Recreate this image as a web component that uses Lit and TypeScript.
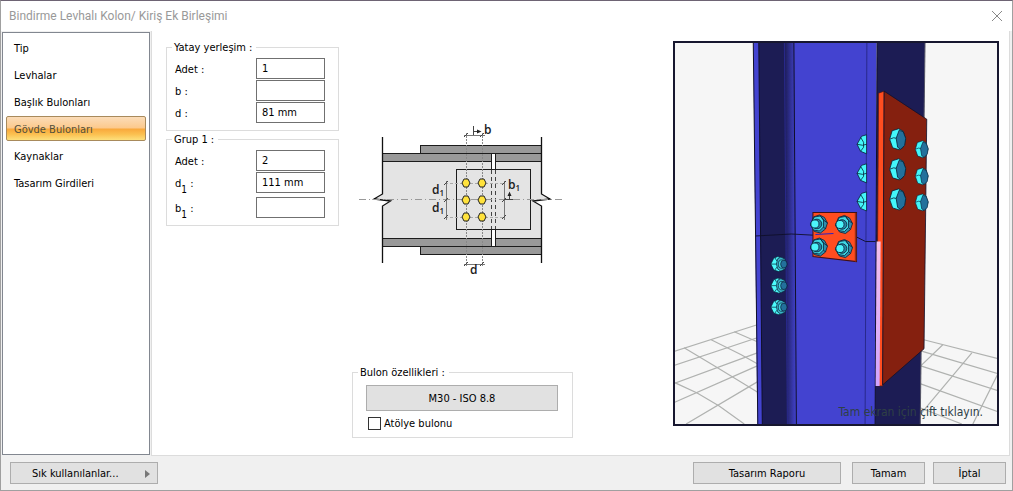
import { LitElement, html, svg, css } from "lit";
import { customElement, property, state } from "lit/decorators.js";

const INK = "#10102a";

@customElement("joint-diagram")
class JointDiagram extends LitElement {
  static styles = css`
    :host { display: block; }
    svg { display: block; width: 100%; height: auto; }
    text { font-family: "Open Sans", sans-serif; font-weight: 600; font-size: 12px; fill: #1a1a1a; }
    .sub { font-size: 8px; }
  `;

  bolt(x: number, y: number) {
    return svg`<polygon points="${x - 4},${y} ${x - 2},${y - 4} ${x + 2},${y - 4} ${x + 4},${y} ${x + 2},${y + 4} ${x - 2},${y + 4}"
      fill="#ffe23c" stroke="#222" stroke-width="1"/>`;
  }

  tick(x: number, y: number) {
    return svg`<path d="M${x - 2} ${y + 2}L${x + 2} ${y - 2}" stroke="#444" stroke-width="1"/>`;
  }

  render() {
    const cols = [466, 482];
    const rows = [183, 200, 217];
    return html`<svg viewBox="352 120 221 160" role="img" aria-label="Bulon yerleşimi">
      <path d="M382.5 153.5H541.5V194L550 199L533 201L541.5 206V246.5H382.5V206L390.500 201L374 199L382.5 194Z" fill="#e4e4e4"/>
      <g fill="#999" stroke="#1c1c1c">
        <rect x="382.5" y="153.500" width="159" height="8"/>
        <rect x="420.5" y="145.500" width="121" height="8"/>
        <rect x="382.5" y="238.500" width="159" height="8"/>
        <rect x="420.5" y="246.500" width="121" height="8"/>
      </g>
      <rect x="491.5" y="153.500" width="4" height="93" fill="#fff" stroke="#1c1c1c"/>
      <rect x="456.5" y="169.500" width="74" height="60" fill="#e4e4e4" stroke="#1c1c1c"/>
      <path d="M491.5 170V229M495.5 170V229" stroke="#444" stroke-dasharray="4 3" fill="none"/>
      <path d="M382.500 137V194L374 199L390.500 201L382.500 206V263M541.500 137V194L550 199L533 201L541.500 206V263" fill="none" stroke="#111" stroke-width="1.3"/>
      <path d="M359 199.500H563" stroke="#999" stroke-dasharray="7 3 1 3" fill="none"/>
      <path d="M466.500 133V266M482.500 133V266" stroke="#888" stroke-dasharray="2 1" fill="none"/>
      <path d="M445 183.500H505M445 217.500H505" stroke="#aaa" stroke-dasharray="3 2" fill="none"/>
      <path d="M464 135.500H485M464 264.500H485M446.500 181V220M504.500 181V220" stroke="#777" fill="none"/>
      ${cols.map((x) => [135, 264].map((y) => this.tick(x, y)))}
      ${[446, 504].map((x) => rows.map((y) => this.tick(x, y)))}
      <path d="M473.500 126V135M474 131.500H478M509.500 200V196M504 199.500H513" stroke="#444" fill="none"/>
      <path d="M477 129.500L481.500 131.500L477 133.500ZM507.500 196L509.500 191.500L511.500 196Z" fill="#222"/>
      ${rows.map((y) => cols.map((x) => this.bolt(x, y)))}
      <text x="484" y="134">b</text>
      <text x="470" y="274">d</text>
      <text x="432" y="194">d<tspan class="sub" dy="2">1</tspan></text>
      <text x="432" y="212">d<tspan class="sub" dy="2">1</tspan></text>
      <text x="508" y="189">b<tspan class="sub" dy="2">1</tspan></text>
    </svg>`;
  }
}

@customElement("joint-scene")
class JointScene extends LitElement {
  static styles = css`
    :host { display: block; position: relative; box-sizing: border-box; border: 2px solid #17172f; background: #f6f6f6; overflow: hidden; }
    svg { display: block; width: 100%; height: 100%; }
    .hint { position: absolute; right: 14px; bottom: 4px; font: 12px/16px "DejaVu Sans Condensed", "DejaVu Sans", sans-serif; color: #2f4045; white-space: nowrap; }
  `;

  /* Hexagonal nut with a threaded end facing left. */
  nut(x: number, y: number) {
    return svg`<g transform="translate(${x} ${y})" stroke="#082038" stroke-width="0.8" stroke-linejoin="round">
      <path d="M-5-7L1-9L6-6.500L9-1L7 5L2 9L-4 7.500L-8 1Z" fill="#2f8fae"/>
      <path d="M-4-7L2-8L5-4L5 3L1 7L-5 6L-8 0Z" fill="#3fd8e4"/>
      <path d="M2-8L5-4L9-1M5 3L7 5" fill="none"/>
      <circle cx="-1.500" cy="0" r="4.800" fill="#2b86a4"/>
      <circle cx="-3.500" cy="0" r="4" fill="#4df4fa"/>
    </g>`;
  }

  /* Nut on the shaded flange, threaded end facing right. */
  sideNut(x: number, y: number) {
    return svg`<g transform="translate(${x} ${y})" stroke="#082038" stroke-width="0.7" stroke-linejoin="round">
      <path d="M-5-6L-1-7.500L4-6L6 0L4 6L0 7.500L-5 6L-8 0Z" fill="#4cfafc"/>
      <path d="M-8 0H-2M-4-6.500L-2-3M-4 6L-2 3" fill="none"/>
      <path d="M-1-5.500L2-7L6-5L8 0L6 5L2 7L-1 5L-2.500 0Z" fill="#39b4c8"/>
      <ellipse cx="3" cy="0" rx="3.600" ry="4.200" fill="#40d0dc"/>
      <ellipse cx="5" cy="0" rx="3.200" ry="3.900" fill="#23719c"/>
    </g>`;
  }

  /* Hexagonal bolt head seen from the side. */
  head(x: number, y: number, s: number) {
    return svg`<g transform="translate(${x} ${y}) scale(${s})" stroke="#082038" stroke-width="0.8" stroke-linejoin="round">
      <path d="M-5.500-8.500L1-10.500L5.500-8L8 0L5 8.500L1.500 10.500L-5 8.500L-8 0Z" fill="#44f6fa"/>
      <path d="M1.500-9L5.500-7.500L8-1L7 6L3 10L0 8L-1.500-1Z" fill="#23719c"/>
      <path d="M-8 0L-4-1.500L-1.500-1" fill="none"/>
    </g>`;
  }

  halfHead(y: number) {
    return svg`<g transform="translate(867 ${y})" stroke="#082038" stroke-width="0.8">
      <path d="M0-9.500L-5-8L-9.500 0L-6 7L0 9.500Z" fill="#44f6fa"/>
      <path d="M-9.500 0L-4 1L0 0M-6-7L-3-2L-3 3L-6 7" fill="none"/>
    </g>`;
  }

  render() {
    return html`<svg viewBox="675 43 323 380" preserveAspectRatio="xMidYMid slice" role="img" aria-label="Birleşimin üç boyutlu görünümü">
      <defs>
        <linearGradient id="fillet"><stop offset="0" stop-color="#1c1c54"/><stop offset="1" stop-color="#4343d0"/></linearGradient>
        <linearGradient id="weld" x2="0" y2="1"><stop offset="0" stop-color="#f4c0ea"/><stop offset="1" stop-color="#d0a4ff"/></linearGradient>
      </defs>
      <g stroke="#b0b2b0" stroke-width="1.2" fill="none">
        <path d="M674 351L758 324M674 365L758 337M674 383L758 352M674 402L758 365M687 423L758 381"/>
        <path d="M735 331L758 341M712 339L742 354L758 363M685 347L715 365L758 391M674 381L698 392L720 405L745 423"/>
        <path d="M924 339L999 358M921 350L999 373M921 365L999 390M921 383L999 411M921 407L962 423"/>
        <path d="M943 344L921 365M972 352L921 413M998 373L973 423"/>
      </g>
      <polygon points="754,43 877,43 876,423 758,423" fill="#4343d0"/>
      <polygon points="759.5,43 786,43 790,423 763,423" fill="#1c1c54"/>
      <polygon points="785,43 794.5,43 797,423 788,423" fill="url(#fillet)"/>
      <polygon points="877.5,43 925.300,43 920.500,423 875.500,423" fill="#1c1c54"/>
      <g stroke="${INK}" fill="none">
        <path d="M754 43L758.500 423M759.500 43L763 423M794.500 43L797 423M877.500 43L875.500 423"/>
        <path d="M867.300 43L865.500 423M785 43L788 423" stroke="#29298c"/>
        <path d="M925.300 43L920.500 423" stroke="#555566"/>
        <path d="M756 235.500L792 233.500L820 235L857 236.500L866 241H876" stroke-width="0.9"/>
      </g>
      ${[144, 173, 201].map((y) => this.halfHead(y))}
      <polygon points="879,93 884.5,91 883,385 877,385" fill="#ff4d20" stroke="#5a1810" stroke-width="0.7"/>
      <polygon points="884.5,91 927,119 924.3,348 883,384" fill="#85200f" stroke="${INK}" stroke-width="0.8"/>
      <polygon points="877,241 881,241 880,385 876,385" fill="url(#weld)"/>
      ${[139, 169, 199].map((y) => this.head(898, y, 1))}
      ${[149, 176, 202].map((y) => this.head(922, y, 0.8))}
      <polygon points="813.5,212 857,212 857,261 813.5,256" fill="#ff4d20" stroke="#401018"/>
      <path d="M856 212.500V261" stroke="#9c3018" stroke-width="1.500"/>
      <path d="M816 234L834 233" stroke="#2c22c0"/>
      ${this.nut(819, 223.5)}${this.nut(844, 224)}${this.nut(819, 246.5)}${this.nut(844, 248)}
      ${[263.5, 285, 306.5].map((y) => this.sideNut(779.5, y))}
    </svg>
    <span class="hint">Tam ekran için çift tıklayın.</span>`;
  }
}

interface Field { id: string; name: string; sub?: string; value: string; }

@customElement("field-group")
class FieldGroup extends LitElement {
  @property() heading = "";
  @property({ attribute: false }) fields: Field[] = [];

  static styles = css`
    :host { display: block; }
    fieldset { margin: 0; min-width: 0; border: 1px solid #dcdcdc; padding: 4px 13px 7px 8px; }
    legend { padding: 0 4px 0 2px; margin-left: -3px; line-height: 13px; }
    .row { display: grid; grid-template-columns: minmax(0, 1fr) 69px; min-height: 22px; align-items: start; }
    .row.indexed { min-height: 25px; }
    .row:last-child { min-height: 21px; }
    label { line-height: 24px; height: 21px; }
    sub { font-size: 10px; line-height: 0; vertical-align: -6px; }
    input { box-sizing: border-box; width: 100%; height: 21px; margin: 0; padding: 0 5px; border: 1px solid #707070; border-radius: 0; background: #fff; color: #000; font: inherit; }
  `;

  render() {
    return html`<fieldset>
      <legend>${this.heading}</legend>
      ${this.fields.map((f) => html`<div class="row ${f.sub ? "indexed" : ""}">
        <label for=${f.id}>${f.name}${f.sub ? html`<sub>${f.sub}</sub>` : ""} :</label>
        <input id=${f.id} type="text" .value=${f.value}>
      </div>`)}
    </fieldset>`;
  }
}

@customElement("app-root")
class AppRoot extends LitElement {
  @state() private selected = 3;

  private pages = ["Tip", "Levhalar", "Başlık Bulonları", "Gövde Bulonları", "Kaynaklar", "Tasarım Girdileri"];
  private horizontal: Field[] = [
    { id: "h-count", name: "Adet", value: "1" },
    { id: "h-b", name: "b", value: "" },
    { id: "h-d", name: "d", value: "81 mm" },
  ];
  private group: Field[] = [
    { id: "g-count", name: "Adet", value: "2" },
    { id: "g-d", name: "d", sub: "1", value: "111 mm" },
    { id: "g-b", name: "b", sub: "1", value: "" },
  ];

  static styles = css`
    :host { display: block; font: 11px/13px "DejaVu Sans Condensed", "DejaVu Sans", sans-serif; color: #000; }
    .dialog { box-sizing: border-box; min-height: 100vh; display: flex; flex-direction: column; background: #f0f0f0; border: 1px solid #a0a0a0; border-top-color: #6e6474; }
    header { display: flex; align-items: center; justify-content: space-between; height: 30px; padding: 0 9px 0 8px; background: #fff; }
    h1 { margin: 0; font: 12px/16px Roboto, sans-serif; color: #999; }
    button { font: inherit; color: inherit; }
    .close { width: 12px; height: 12px; padding: 0; border: 0; background: none; color: #888; }
    .close svg { display: block; }
    .body { flex: 1; display: flex; gap: 1px; background: #f0f0f0; }
    nav { box-sizing: border-box; width: 148px; margin: 1px 0 1px 1px; padding: 2px 3px; border: 1px solid #828790; background: #fff; display: flex; flex-direction: column; gap: 2px; }
    .page { height: 25px; padding: 2px 7px 0; border: 1px solid transparent; border-radius: 2px; background: none; text-align: left; }
    .page.active { border-color: #a88a5c; color: #51503c; background: linear-gradient(#fbdcb8 0%, #fcc98c 48%, #f9a83c 52%, #fbc050 75%, #fde07c 100%); }
    main { flex: 1; min-width: 0; box-sizing: border-box; margin-right: 2px; padding: 9px 10px 17px 14px; border: 1px solid #dcdcdc; border-top: 0; background: #fff; display: grid; grid-template-columns: 173px 221px minmax(0, 1fr); column-gap: 13px; align-items: stretch; }
    .forms { display: flex; flex-direction: column; gap: 2px; padding-top: 1px; }
    .center { display: flex; flex-direction: column; justify-content: space-between; padding-top: 80px; }
    joint-scene { margin-left: 87px; margin-top: 1px; min-height: 384px; margin-bottom: 12px; }
    .bolts { margin: 0; min-width: 0; padding: 6px 14px 6px 13px; border: 1px solid #dcdcdc; }
    .bolts legend { margin-left: -8px; padding: 0 4px 0 2px; line-height: 13px; }
    .push { box-sizing: border-box; height: 22px; padding: 1px 0 0; border: 1px solid #adadad; background: #e1e1e1; }
    .bolt-type { display: block; width: 100%; height: 26px; }
    .check { display: flex; align-items: center; gap: 3px; margin: 4px 0 0 2px; height: 16px; }
    .check input { appearance: none; box-sizing: border-box; width: 13px; height: 13px; margin: 0; border: 1px solid #333; background: #fff; }
    footer { display: flex; align-items: center; height: 34px; padding: 0 6px 0 9px; }
    .favorites { width: 148px; padding: 1px 7px 0 21px; display: flex; align-items: center; justify-content: space-between; }
    .favorites svg { display: block; }
    .actions { margin-left: auto; display: flex; gap: 8px; }
    .report { width: 148px; margin-right: 3px; }
    .short { width: 73px; }
  `;

  render() {
    return html`<div class="dialog">
      <header>
        <h1>Bindirme Levhalı Kolon/ Kiriş Ek Birleşimi</h1>
        <button class="close" aria-label="Kapat">
          <svg width="12" height="12" viewBox="0 0 12 12"><path d="M1 1L11 11M11 1L1 11" stroke="currentColor" fill="none"/></svg>
        </button>
      </header>
      <div class="body">
        <nav>
          ${this.pages.map((p, i) => html`<button class="page ${i === this.selected ? "active" : ""}" @click=${() => (this.selected = i)}>${p}</button>`)}
        </nav>
        <main>
          <div class="forms">
            <field-group heading="Yatay yerleşim :" .fields=${this.horizontal}></field-group>
            <field-group heading="Grup 1 :" .fields=${this.group}></field-group>
          </div>
          <div class="center">
            <joint-diagram></joint-diagram>
            <fieldset class="bolts">
              <legend>Bulon özellikleri :</legend>
              <button class="push bolt-type">M30 - ISO 8.8</button>
              <div class="check"><input id="shop" type="checkbox"><label for="shop">Atölye bulonu</label></div>
            </fieldset>
          </div>
          <joint-scene></joint-scene>
        </main>
      </div>
      <footer>
        <button class="push favorites">Sık kullanılanlar...
          <svg width="5" height="8" viewBox="0 0 5 8"><path d="M0 0L5 4L0 8Z" fill="#777"/></svg>
        </button>
        <div class="actions">
          <button class="push report">Tasarım Raporu</button>
          <button class="push short">Tamam</button>
          <button class="push short">İptal</button>
        </div>
      </footer>
    </div>`;
  }
}
